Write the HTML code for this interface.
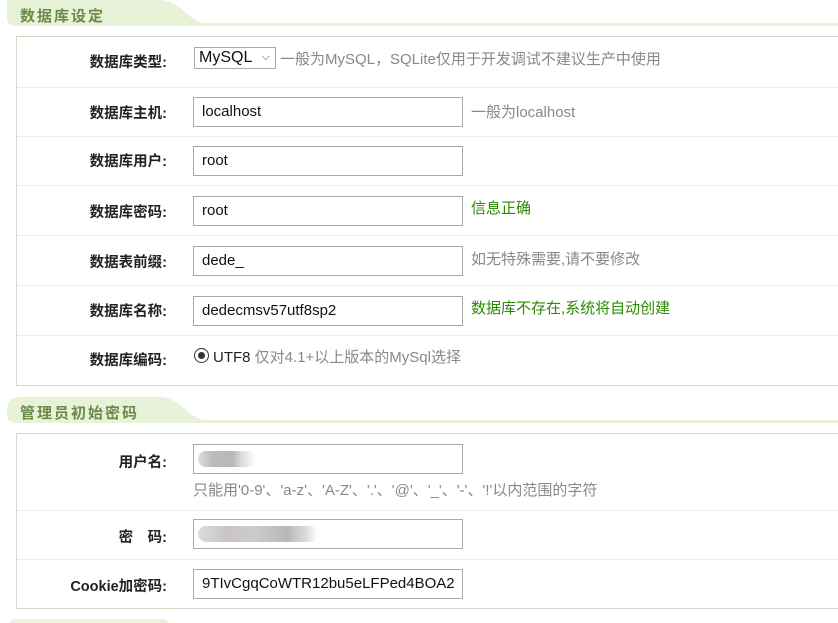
<!DOCTYPE html>
<html><head><meta charset="utf-8"><style>
*{margin:0;padding:0;box-sizing:border-box}
body{width:838px;height:621px;overflow:hidden;background:#fff;font-family:"Liberation Sans","Noto Sans CJK SC",sans-serif;font-size:15px;color:#333;position:relative}
.hd{position:absolute;left:0;width:838px;height:28px}
.hd svg{position:absolute;left:0;top:0}
.hd span{position:absolute;left:20px;font-weight:bold;color:#6b8a48;font-size:15px;letter-spacing:2px}
.box{position:absolute;left:16px;width:830px;border:1px solid #d3dcc8;border-right:none}
.row{position:absolute;left:0;width:830px;border-top:1px solid #ececec}
.lab{position:absolute;right:680px;font-weight:bold;font-size:14.5px;color:#222;white-space:nowrap}
.inp{position:absolute;left:176px;width:270px;height:30px;border:1px solid #a9a9a9;padding-left:8px;line-height:28px;font-size:15px;color:#111}
.tip{position:absolute;left:454px;color:#888;font-size:15px;white-space:nowrap}
.ok{color:#2a8a00}
.blur{position:absolute;height:16px;border-radius:8px}
</style></head><body>

<div class="hd" style="top:0">
<svg width="838" height="28"><path d="M0 0H160C180 0 190 23 205 23H838V26H18Q7 26 7 18V0Z" fill="#e8f2d9"/></svg>
<span style="top:5px">数据库设定</span></div>

<div class="box" style="top:36px;height:350px">
 <div class="row" style="top:0;border:none;height:50px"><div class="lab" style="top:14px">数据库类型:</div>
  <div class="inp" style="top:10px;width:82px;height:22px;line-height:20px;padding-left:4px;left:177px;font-size:16px">MySQL <span style="position:absolute;right:5px;top:-1px;font-size:11px;color:#555">⌵</span></div>
  <div class="tip" style="left:263px;top:11px">一般为MySQL，SQLite仅用于开发调试不建议生产中使用</div></div>
 <div class="row" style="top:50px"><div class="lab" style="top:14px">数据库主机:</div><div class="inp" style="top:9px">localhost</div><div class="tip" style="top:13px">一般为localhost</div></div>
 <div class="row" style="top:99px"><div class="lab" style="top:13px">数据库用户:</div><div class="inp" style="top:9px">root</div></div>
 <div class="row" style="top:148px"><div class="lab" style="top:15px">数据库密码:</div><div class="inp" style="top:10px">root</div><div class="tip ok" style="top:11px">信息正确</div></div>
 <div class="row" style="top:198px"><div class="lab" style="top:15px">数据表前缀:</div><div class="inp" style="top:10px">dede_</div><div class="tip" style="top:12px">如无特殊需要,请不要修改</div></div>
 <div class="row" style="top:248px"><div class="lab" style="top:14px">数据库名称:</div><div class="inp" style="top:10px">dedecmsv57utf8sp2</div><div class="tip ok" style="top:11px">数据库不存在,系统将自动创建</div></div>
 <div class="row" style="top:298px"><div class="lab" style="top:13px">数据库编码:</div>
  <div style="position:absolute;left:177px;top:12px;width:15px;height:15px;border:1px solid #333;border-radius:50%"><div style="margin:3px;width:7px;height:7px;border-radius:50%;background:#333"></div></div>
  <div class="tip" style="left:196px;top:10px;color:#888"><span style="color:#222">UTF8</span> 仅对4.1+以上版本的MySql选择</div></div>
</div>

<div class="hd" style="top:397px">
<svg width="838" height="28"><path d="M7 14Q7 0 20 0H160C180 0 190 23 205 23H838V26H18Q7 26 7 18Z" fill="#e8f2d9"/></svg>
<span style="top:5px">管理员初始密码</span></div>

<div class="box" style="top:433px;height:176px">
 <div class="row" style="top:0;border:none;height:76px"><div class="lab" style="top:17px">用户名:</div>
  <div class="inp" style="top:10px"><div class="blur" style="left:4px;top:6px;width:58px;background:linear-gradient(90deg,#e2dedd,#bbb 25%,#b8b8b8 60%,#dcdcdc 75%,#fff)"></div></div>
  <div class="tip" style="left:176px;top:45px">只能用'0-9'、'a-z'、'A-Z'、'.'、'@'、'_'、'-'、'!'以内范围的字符</div></div>
 <div class="row" style="top:76px"><div class="lab" style="top:15px">密　码:</div>
  <div class="inp" style="top:8px"><div class="blur" style="left:4px;top:6px;width:120px;background:linear-gradient(90deg,#ddd,#c8c4c3 25%,#ccc 45%,#b8b8b8 75%,#d8dcdf 90%,#fff)"></div></div></div>
 <div class="row" style="top:125px"><div class="lab" style="top:15px">Cookie加密码:</div><div class="inp" style="top:9px">9TIvCgqCoWTR12bu5eLFPed4BOA2</div></div>
</div>
<div style="position:absolute;left:10px;top:619px;width:158px;height:4px;background:#eaf4dc;border-radius:4px 4px 0 0"></div>
</body></html>
